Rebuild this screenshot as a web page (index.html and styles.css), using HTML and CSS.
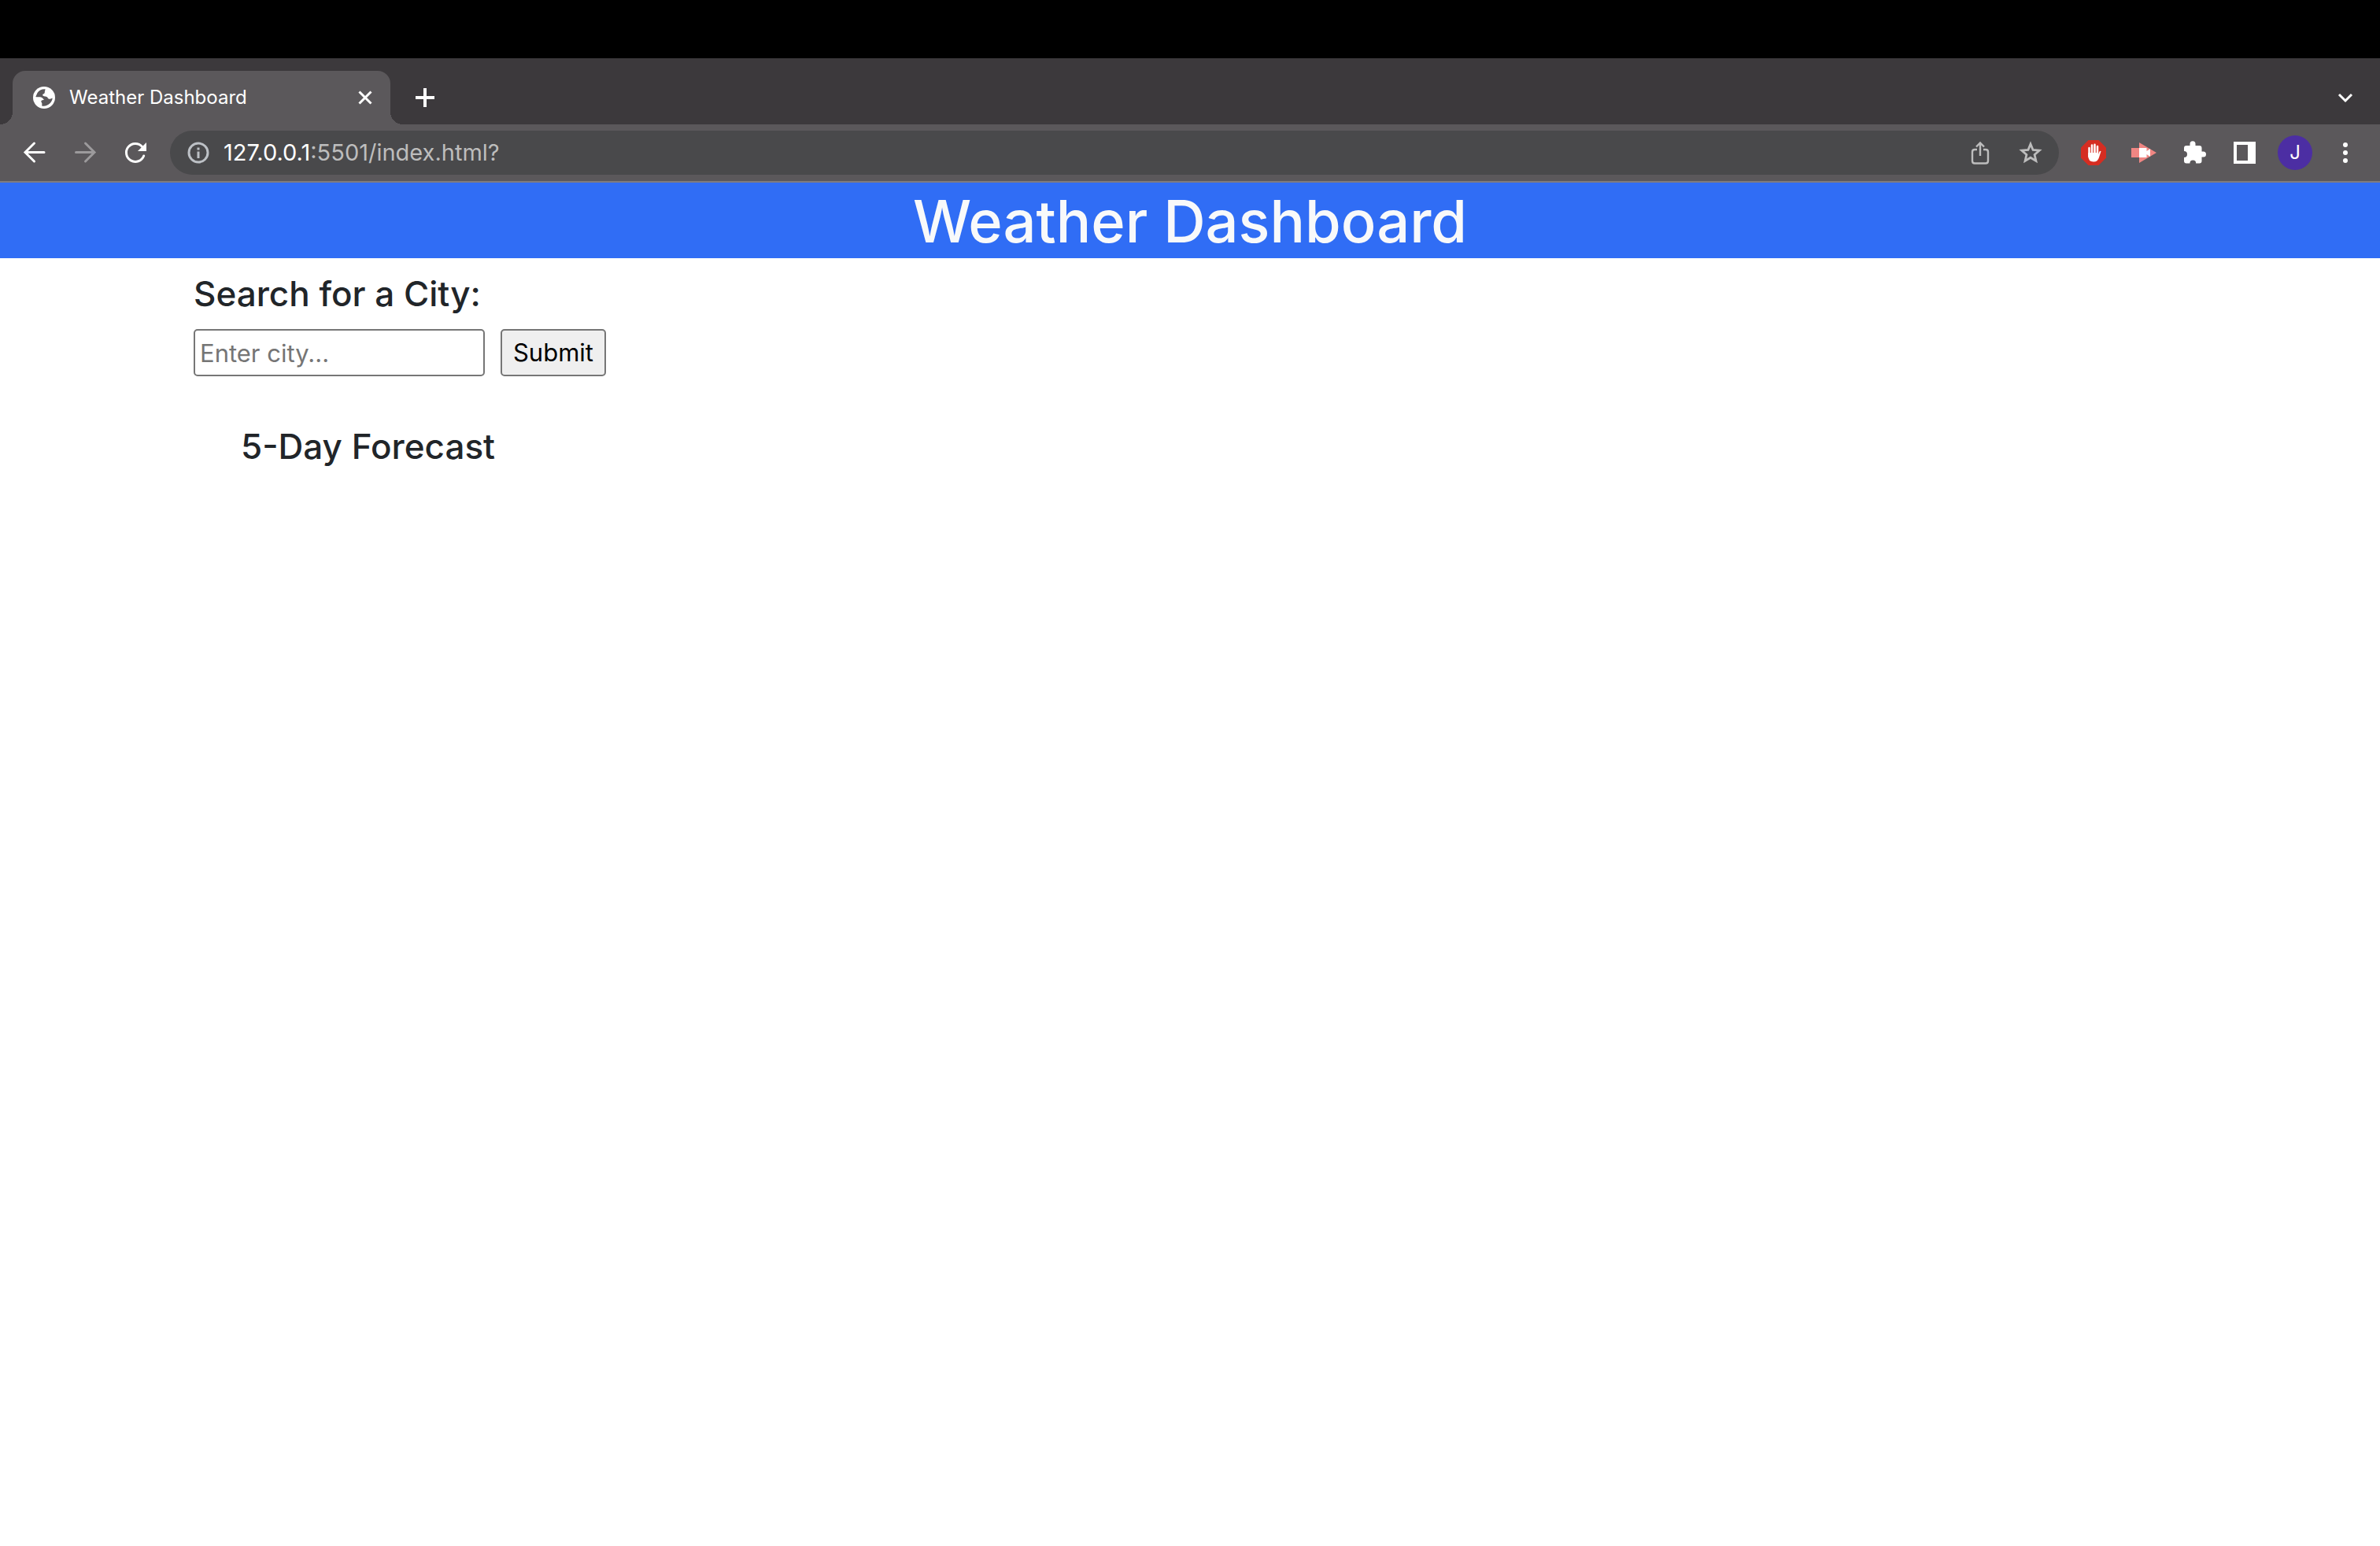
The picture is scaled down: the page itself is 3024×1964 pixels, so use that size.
FILE: index.html
```html
<!DOCTYPE html>
<html lang="en">
<head>
  <meta charset="utf-8">
  <meta name="viewport" content="width=device-width, initial-scale=1">
  <title>Weather Dashboard</title>
  <link rel="stylesheet" href="styles.css">
</head>
<body>
  <div class="menu-strip"></div>

  <div class="tab-strip">
    <div class="tab">
      <svg class="favicon" viewBox="0 0 28 28" aria-hidden="true">
        <circle cx="14" cy="14" r="14" fill="#fff"/>
        <path d="M15.500 3.300C11 3 7.500 5 5.500 8L3.300 13C5 13.600 8 13 10 13.400C12 13.800 12.500 15.500 14 16.500C13 17.500 10.500 17 10.300 18.500C10.200 20 11.500 20.500 11.400 22L11.200 24.400C18 26 24.300 20.500 24.700 14.500C23 15.200 21.500 16.300 19.800 15.500C18.500 14.800 18.800 13.300 17.300 12.900C15.500 12.500 12.300 12.500 12.200 10.800C12.100 9 15 9.200 14.800 7.200C14.700 5.800 15.500 5 15.500 3.300Z" fill="#5b585b"/>
      </svg>
      <span class="tab-title">Weather Dashboard</span>
      <button class="tab-button" type="button" aria-label="Close tab">
        <svg viewBox="0 0 32 32"><path d="M8.500 8.500L23.500 23.500M23.500 8.500L8.500 23.500" fill="none" stroke="#fff" stroke-width="3"/></svg>
      </button>
    </div>
    <button class="tab-button new-tab" type="button" aria-label="New tab">
      <svg viewBox="0 0 32 32"><path d="M16 4V28M4 16H28" fill="none" stroke="#fff" stroke-width="4"/></svg>
    </button>
    <button class="tool tab-search" type="button" aria-label="Search tabs">
      <svg viewBox="0 0 64 56"><path d="M24 24L32 32L40 24" fill="none" stroke="#fff" stroke-width="3"/></svg>
    </button>
  </div>

  <div class="toolbar">
    <div class="tools">
      <button class="tool" type="button" aria-label="Back">
        <svg viewBox="0 0 64 56"><path d="M44 27.500H20.500M31.500 16L20 27.500L31.500 39" fill="none" stroke="#fff" stroke-width="3" stroke-linecap="round"/></svg>
      </button>
      <button class="tool" type="button" aria-label="Forward">
        <svg viewBox="0 0 64 56"><path d="M20.500 27.500H44M32.500 16L44 27.500L32.500 39" fill="none" stroke="#9c9a9c" stroke-width="3" stroke-linecap="round"/></svg>
      </button>
      <button class="tool" type="button" aria-label="Reload">
        <svg viewBox="0 0 64 56"><path d="M42.700 32A11.500 11.500 0 1 1 40.500 20.200" fill="none" stroke="#fff" stroke-width="3" stroke-linecap="round"/><path d="M46 15V26H35Z" fill="#fff"/></svg>
      </button>
    </div>

    <div class="address-bar">
      <button class="tool" type="button" aria-label="Site information">
        <svg viewBox="0 0 64 56"><circle cx="32" cy="28" r="12" fill="none" stroke="#bdc1c6" stroke-width="3"/><path d="M30.500 21.500H33.500V24.500H30.500ZM30.500 26.500H33.500V35H30.500Z" fill="#bdc1c6"/></svg>
      </button>
      <div class="address" role="textbox" contenteditable="true" spellcheck="false" aria-label="Address"><span class="address-host">127.0.0.1</span>:5501/index.html?</div>
      <button class="tool" type="button" aria-label="Share">
        <svg viewBox="0 0 64 56"><path d="M28 24H25Q22 24 22 27V38.500Q22 41.500 25 41.500H39Q42 41.500 42 38.500V27Q42 24 39 24H36M32 32V16M27 20.500L32 15.500L37 20.500" fill="none" stroke="#bdbdbd" stroke-width="2.400"/></svg>
      </button>
      <button class="tool" type="button" aria-label="Bookmark this page">
        <svg viewBox="0 0 64 56"><path d="M32 17L35.100 24.500L43.200 25.200L37.100 30.500L38.900 38.400L32 34.200L25.100 38.400L26.900 30.500L20.800 25.200L28.900 24.500Z" fill="none" stroke="#bdbdbd" stroke-width="2.800"/></svg>
      </button>
    </div>

    <div class="tools">
      <button class="tool" type="button" aria-label="Ad blocker">
        <svg viewBox="0 0 64 56"><path d="M25.500 12H38.500L48 21.500V34.500L38.500 44H25.500L16 34.500V21.500Z" fill="#d52d22"/><path d="M26.500 22V33M30 18.500V30M33.500 17.800V30M37 20V32" fill="none" stroke="#fff" stroke-width="2.500" stroke-linecap="round"/><path d="M25.250 28H38.250V30.500L39.500 26.500Q41 25 41.500 26.200L39 34Q37.500 39.500 32 39.500Q25.250 39.500 25.250 32Z" fill="#fff"/></svg>
      </button>
      <button class="tool" type="button" aria-label="Screen recorder">
        <svg viewBox="0 0 64 56"><path d="M16 22H26V34H16ZM26 15L48 28L26 41Z" fill="#f08683"/><path d="M26 22H35.500V26L40 23V33L35.500 30V34H26Z" fill="#fff"/></svg>
      </button>
      <button class="tool" type="button" aria-label="Extensions">
        <svg viewBox="0 0 64 56"><path d="M26.500 19V16.800A3.500 3.500 0 0 1 33.500 16.800V19H38.500Q41.500 19 41.500 22V26.500H43.500A3.500 3.500 0 0 1 43.500 33.500H41.500V38.500Q41.500 41.500 38.500 41.500H34.200A3.900 3.900 0 0 0 26.400 41.500H22Q19 41.500 19 38.500V34A4 4 0 0 0 19 26V22Q19 19 22 19Z" fill="#fff"/></svg>
      </button>
      <button class="tool" type="button" aria-label="Side panel">
        <svg viewBox="0 0 64 56"><path d="M18 14H46V42H18ZM22 18V38H36V18Z" fill="#fff" fill-rule="evenodd"/></svg>
      </button>
      <button class="tool" type="button" aria-label="Profile"><span class="avatar">J</span></button>
      <button class="tool" type="button" aria-label="Menu">
        <svg viewBox="0 0 64 56"><g fill="#fff"><circle cx="32" cy="18" r="3"/><circle cx="32" cy="28" r="3"/><circle cx="32" cy="38" r="3"/></g></svg>
      </button>
    </div>
  </div>

  <header class="page-header">
    <h1>Weather Dashboard</h1>
  </header>

  <main class="content">
    <form class="search">
      <label class="heading" for="city">Search for a City:</label>
      <div class="search-row">
        <input class="search-input" id="city" type="text" placeholder="Enter city...">
        <button class="search-button" type="submit">Submit</button>
      </div>
    </form>
    <section class="forecast">
      <h2 class="heading">5-Day Forecast</h2>
    </section>
  </main>
</body>
</html>
```

FILE: styles.css
```css
* {
  box-sizing: border-box;
}

body {
  margin: 0;
  background: #fff;
  color: #212529;
  font-family: Inter, "Liberation Sans", sans-serif;
  font-size: 31px;
  line-height: 48px;
}

button {
  margin: 0;
  padding: 0;
  border: 0;
  background: none;
  color: inherit;
  font: inherit;
}

svg {
  display: block;
  width: 100%;
  height: 100%;
}

/* Browser window */
.menu-strip {
  height: 74px;
  background: #000;
}

.tab-strip {
  display: flex;
  align-items: center;
  height: 84px;
  padding: 16px 12px 0 16px;
  background: #3c393c;
}

.tab {
  position: relative;
  display: flex;
  align-items: center;
  width: 480px;
  height: 68px;
  padding: 0 16px 0 26px;
  border-radius: 16px 16px 0 0;
  background: #5b585b;
  color: #fff;
}

.tab::before,
.tab::after {
  content: "";
  position: absolute;
  bottom: 0;
  width: 16px;
  height: 16px;
}

.tab::before {
  right: 100%;
  background: radial-gradient(circle at 0 0, transparent 16px, #5b585b 16px);
}

.tab::after {
  left: 100%;
  background: radial-gradient(circle at 100% 0, transparent 16px, #5b585b 16px);
}

.favicon {
  flex: none;
  width: 28px;
  height: 28px;
}

.tab-title {
  flex: 1;
  margin-left: 18px;
  font-size: 24px;
}

.tab-button {
  flex: none;
  width: 32px;
  height: 32px;
}

.new-tab {
  margin-left: 28px;
}

.tab-search {
  margin-left: auto;
}

.toolbar {
  display: flex;
  align-items: center;
  gap: 12px;
  height: 74px;
  padding: 0 12px;
  border-bottom: 2px solid #7f7b7f;
  background: #5b585b;
}

.tools {
  display: flex;
}

.tool {
  display: grid;
  flex: none;
  place-items: center;
  width: 64px;
  height: 56px;
}

.address-bar {
  display: flex;
  flex: 1;
  align-items: center;
  height: 56px;
  padding: 0 4px;
  border-radius: 28px;
  background: #49494b;
}

.address {
  flex: 1;
  color: #bdbdbd;
  font-size: 29px;
  white-space: nowrap;
}

.address-host {
  color: #fff;
}

.avatar {
  width: 44px;
  height: 44px;
  border-radius: 50%;
  background: #4c2ea3;
  color: #fff;
  font-size: 24px;
  line-height: 44px;
  text-align: center;
}

/* Weather page */
.page-header {
  padding-top: 2px;
  background: #306df5;
  color: #f8f9fa;
  text-align: center;
}

h1 {
  margin: 0;
  font-size: 74px;
  font-weight: 500;
  line-height: 94px;
}

.content {
  padding: 16px 246px;
}

.heading {
  display: block;
  margin: 0;
  font-size: 44px;
  font-weight: 500;
  line-height: 58px;
}

.search-row {
  display: flex;
  gap: 20px;
  margin-top: 16px;
}

.search-input,
.search-button {
  height: 60px;
  border: 2px solid #767676;
  border-radius: 5px;
  font: inherit;
}

.search-input {
  width: 370px;
  padding: 2px 6px;
  background: #fff;
  color: #212529;
}

.search-input::placeholder {
  color: #757575;
  opacity: 1;
}

.search-button {
  width: 134px;
  background: #efefef;
  color: #000;
}

.forecast {
  padding: 60px;
}
```
